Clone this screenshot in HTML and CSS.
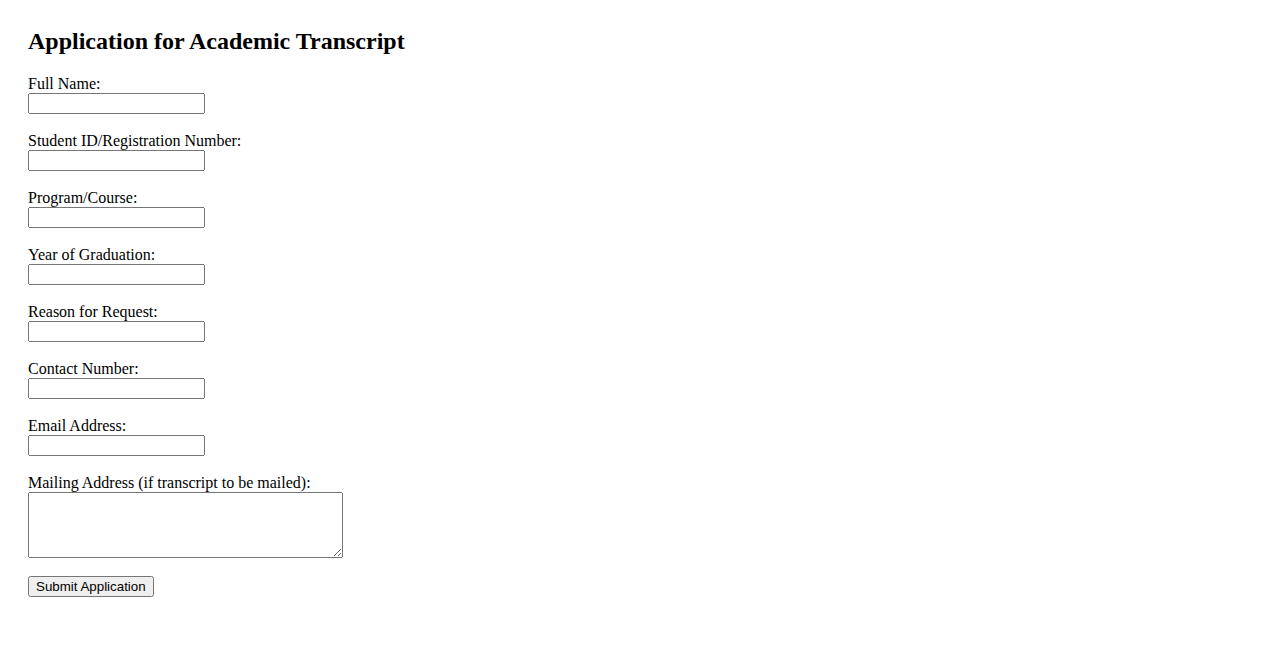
FILE: index.html
```html
<!DOCTYPE html>
<html lang="en">
<head>
<meta charset="utf-8">
<title>Application for Academic Transcript</title>
<link rel="stylesheet" href="styles.css">
</head>
<body>
<div class="container">
  <h2 class="title">Application for Academic Transcript</h2>
  <form class="form">
    <div class="form-group">
      <label class="label" for="name">Full Name:</label>
      <input class="field" type="text" id="name">
    </div>
    <div class="form-group">
      <label class="label" for="sid">Student ID/Registration Number:</label>
      <input class="field" type="text" id="sid">
    </div>
    <div class="form-group">
      <label class="label" for="program">Program/Course:</label>
      <input class="field" type="text" id="program">
    </div>
    <div class="form-group">
      <label class="label" for="year">Year of Graduation:</label>
      <input class="field" type="text" id="year">
    </div>
    <div class="form-group">
      <label class="label" for="reason">Reason for Request:</label>
      <input class="field" type="text" id="reason">
    </div>
    <div class="form-group">
      <label class="label" for="phone">Contact Number:</label>
      <input class="field" type="text" id="phone">
    </div>
    <div class="form-group">
      <label class="label" for="email">Email Address:</label>
      <input class="field" type="text" id="email">
    </div>
    <div class="form-group">
      <label class="label" for="address">Mailing Address (if transcript to be mailed):</label>
      <textarea class="area" id="address" rows="4"></textarea>
    </div>
    <div class="form-group">
      <button class="submit" type="submit">Submit Application</button>
    </div>
  </form>
</div>
</body>
</html>
```
FILE: styles.css
```css
html, body {
  background: #ffffff;
}
body {
  margin: 8px;
  font-family: "Liberation Serif", "Times New Roman", serif;
  font-size: 16px;
  color: #000000;
}
.container {
  padding: 20px;
}
.title {
  margin: 0 0 19.92px 0;
  font-size: 24px;
  font-weight: bold;
}
.form {
  margin: 0;
}
.form-group {
  margin-bottom: 18px;
}
.label {
  display: block;
}
.field {
  display: block;
  box-sizing: border-box;
  width: 177px;
  height: 21px;
  font-family: "Liberation Sans", Arial, sans-serif;
  font-size: 13.333px;
  margin: 0;
}
.area {
  display: block;
  box-sizing: border-box;
  width: 315px;
  height: 66px;
  font-family: "Liberation Mono", monospace;
  font-size: 13.333px;
  margin: 0;
}
.submit {
  display: block;
  font-family: "Liberation Sans", Arial, sans-serif;
  font-size: 13.333px;
  height: 21px;
  margin: 0;
}
```
